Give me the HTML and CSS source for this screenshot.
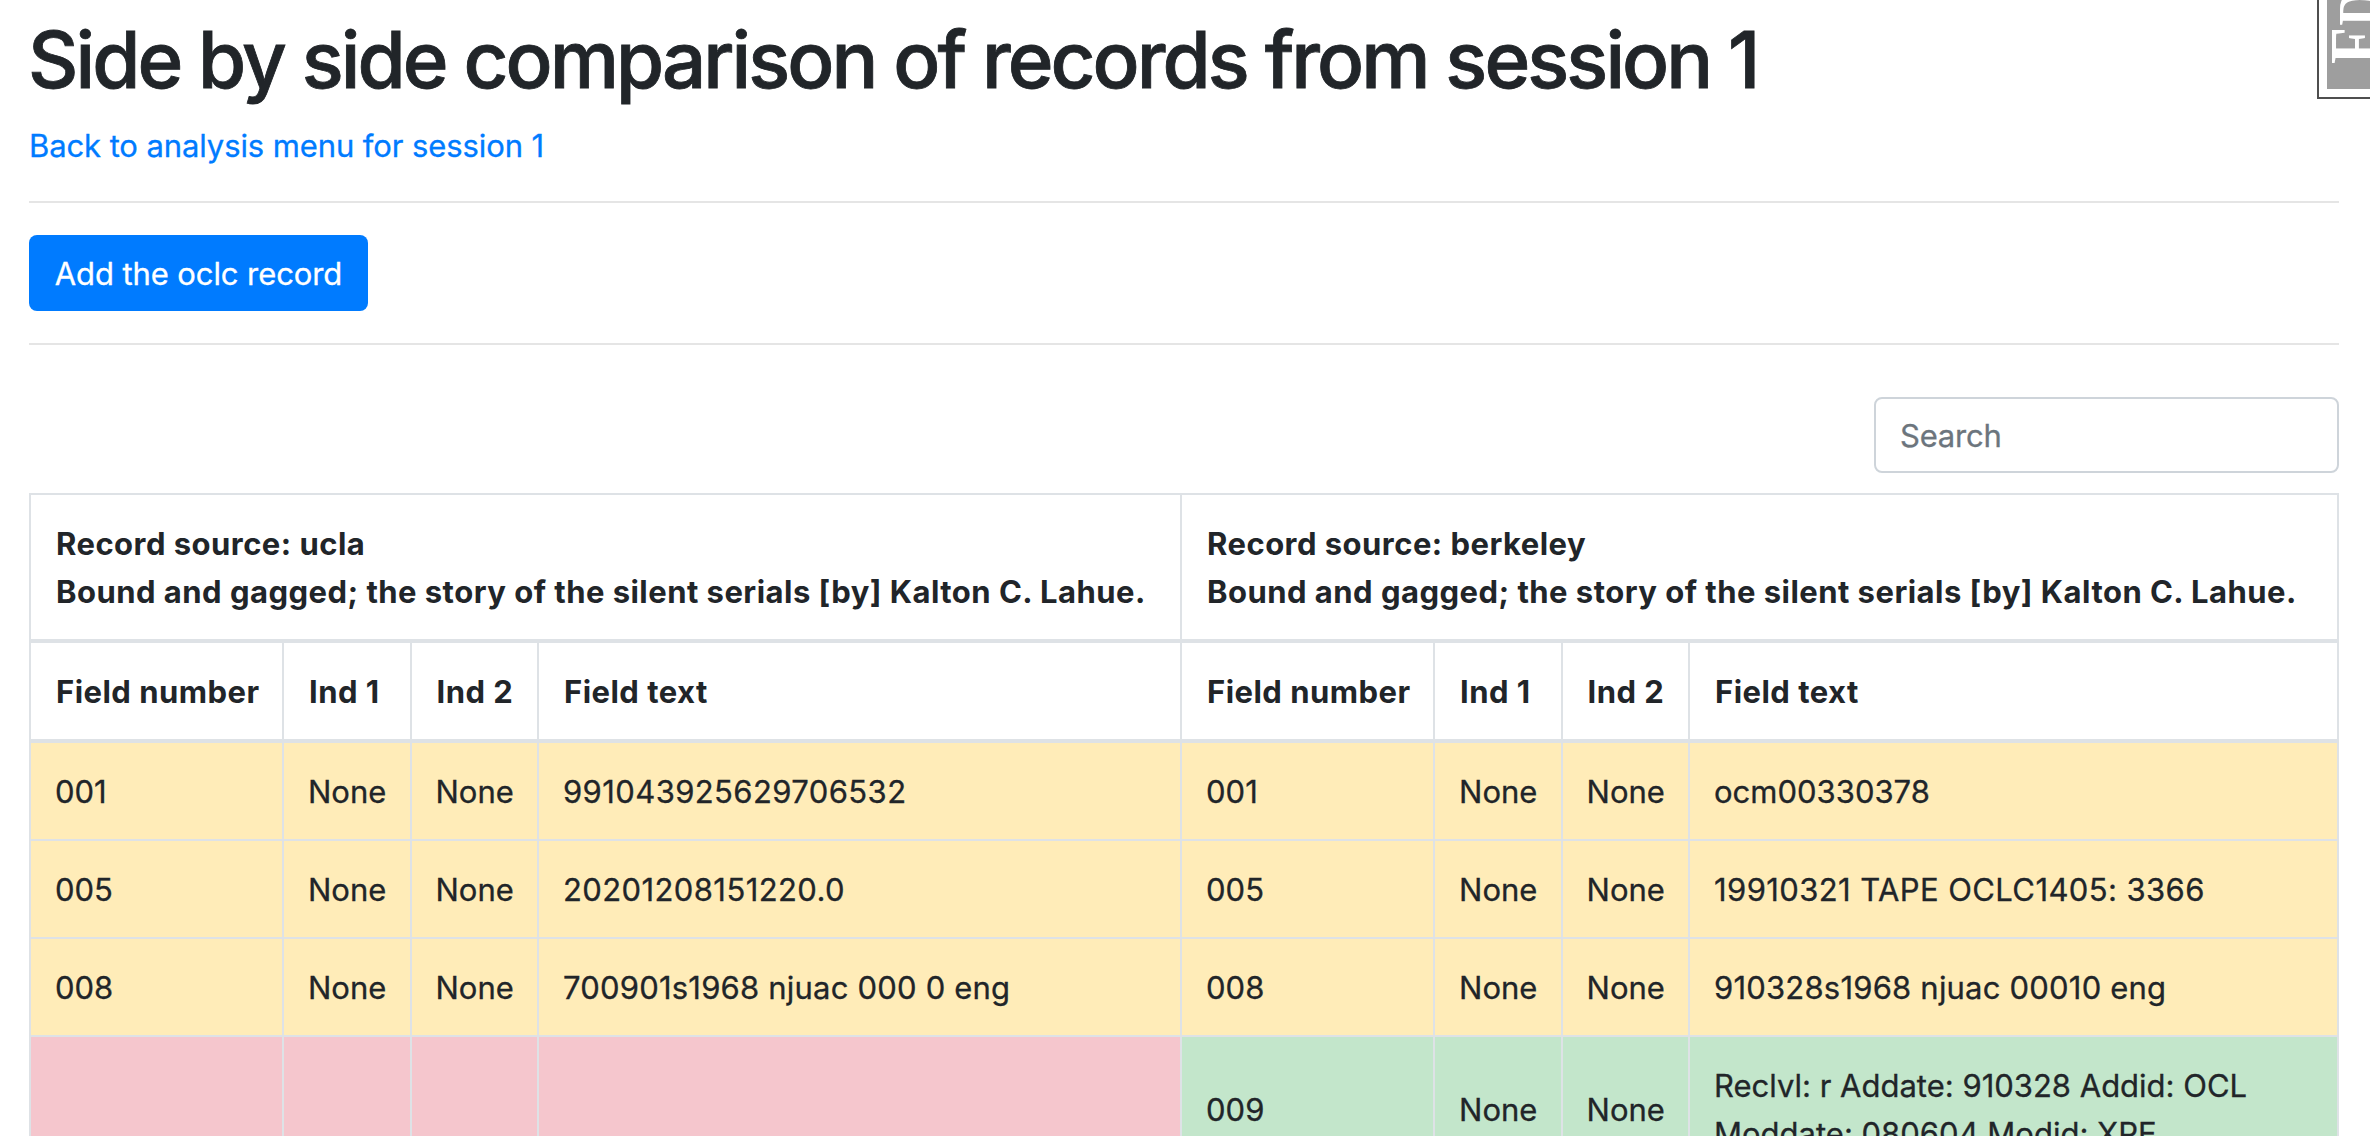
FILE: index.html
```html
<!DOCTYPE html>
<html lang="en">
<head>
<meta charset="utf-8">
<title>Side by side comparison</title>
<link rel="stylesheet" href="styles.css">
</head>
<body>
<main class="container">
  <h1 class="title">Side by side comparison of records from session 1</h1>
  <a class="back" href="#">Back to analysis menu for session 1</a>
  <hr class="rule">
  <button class="btn" type="button">Add the oclc record</button>
  <hr class="rule">
  <div class="toolbar"><input class="search" type="text" placeholder="Search"></div>
  <table class="records">
    <colgroup>
      <col class="c-num"><col class="c-ind"><col class="c-ind"><col class="c-text">
      <col class="c-num"><col class="c-ind"><col class="c-ind"><col>
    </colgroup>
    <thead>
      <tr class="sources">
        <th colspan="4">Record source: ucla<br>Bound and gagged; the story of the silent serials [by] Kalton C. Lahue.</th>
        <th colspan="4">Record source: berkeley<br>Bound and gagged; the story of the silent serials [by] Kalton C. Lahue.</th>
      </tr>
      <tr class="fields">
        <th>Field number</th><th>Ind 1</th><th>Ind 2</th><th>Field text</th>
        <th>Field number</th><th>Ind 1</th><th>Ind 2</th><th>Field text</th>
      </tr>
    </thead>
    <tbody>
      <tr class="changed">
        <td>001</td><td>None</td><td>None</td><td class="digits">991043925629706532</td>
        <td>001</td><td>None</td><td>None</td><td>ocm00330378</td>
      </tr>
      <tr class="changed">
        <td>005</td><td>None</td><td>None</td><td class="digits">20201208151220.0</td>
        <td>005</td><td>None</td><td>None</td><td class="digits">19910321 TAPE OCLC1405: 3366</td>
      </tr>
      <tr class="changed">
        <td>008</td><td>None</td><td>None</td><td class="mixed">700901s1968 njuac 000 0 eng</td>
        <td>008</td><td>None</td><td>None</td><td class="mixed">910328s1968 njuac 00010 eng</td>
      </tr>
      <tr>
        <td class="missing"></td><td class="missing"></td><td class="missing"></td><td class="missing"></td>
        <td class="added">009</td><td class="added">None</td><td class="added">None</td>
        <td class="added">Reclvl: r Addate: 910328 Addid: OCL<br>Moddate: 080604 Modid: XPE</td>
      </tr>
    </tbody>
  </table>
</main>
<div class="debug-tab">
  <svg class="debug-logo" viewBox="0 0 60 89" width="60" height="89">
    <g class="debug-text" transform="translate(51.5 64) rotate(-90) scale(.84 1)">
      <text class="big" x="0" y="0">F</text>
      <text class="small" x="45.5" y="0">DT</text>
    </g>
  </svg>
</div>
</body>
</html>
```
FILE: styles.css
```css
* { box-sizing: border-box; }

html, body { height: 100%; }

body {
  margin: 0;
  overflow: hidden;
  position: relative;
  background: #fff;
  color: #212529;
  font-family: Inter, "Liberation Sans", sans-serif;
  font-size: 31px;
  line-height: 48px;
  -webkit-text-stroke: 0.3px;
}

.container { padding: 12px 31px 0 29px; }

.title {
  margin: 0 0 14px -1px;
  font-size: 78px;
  font-weight: 500;
  line-height: 96px;
  letter-spacing: -2.95px;
  white-space: nowrap;
  -webkit-text-stroke: 0.8px;
}

.back {
  display: block;
  color: #007bff;
  text-decoration: none;
  letter-spacing: -0.1px;
}

.rule {
  height: 2px;
  margin: 31px 0 32px;
  border: 0;
  background: #e5e5e5;
}

.btn {
  display: block;
  width: 339px;
  height: 76px;
  padding: 1px 0 0;
  border: 0;
  border-radius: 8px;
  background: #007bff;
  color: #fff;
  font: inherit;
  letter-spacing: -0.1px;
  text-align: center;
}

.btn + .rule { margin: 32px 0 52px; }

.toolbar {
  display: flex;
  justify-content: flex-end;
  margin-bottom: 20px;
}

.search {
  width: 465px;
  height: 76px;
  padding: 0 24px;
  border: 2px solid #ced4da;
  border-radius: 8px;
  font: inherit;
  letter-spacing: -0.2px;
}

.search::placeholder { color: #6c757d; opacity: 1; }

.records {
  width: 2310px;
  table-layout: fixed;
  border-collapse: collapse;
}

.c-num { width: 253px; }
.c-ind { width: 127.5px; }
.c-text { width: 643px; }

.records th,
.records td {
  padding: 25px 24px 23px;
  border: 2px solid #dee2e6;
  text-align: left;
  vertical-align: middle;
  white-space: nowrap;
}

.records th {
  padding-left: 25px;
  font-weight: 700;
  border-bottom-width: 4px;
  letter-spacing: 0.47px;
  -webkit-text-stroke: 0;
}

.sources { height: 147px; }
.fields { height: 100px; }

.records .digits { letter-spacing: 0.4px; }
.records .mixed { letter-spacing: 0.2px; }

.changed td { background: #ffecb8; }
.missing { background: #f5c6cd; }
.added { background: #c3e6cb; }

.debug-tab {
  position: absolute;
  top: 0;
  right: 0;
  width: 53px;
  height: 99px;
  padding-left: 8px;
  border: solid #4f4f4f;
  border-width: 0 0 2px 2px;
  background: #fff;
  overflow: hidden;
}

.debug-logo { display: block; background: #9e9e9e; }

.debug-text {
  fill: #fff;
  font-family: "Liberation Serif", serif;
  font-weight: 700;
  -webkit-text-stroke: 0;
}
.big { font-size: 72px; }
.small { font-size: 60px; }
```
